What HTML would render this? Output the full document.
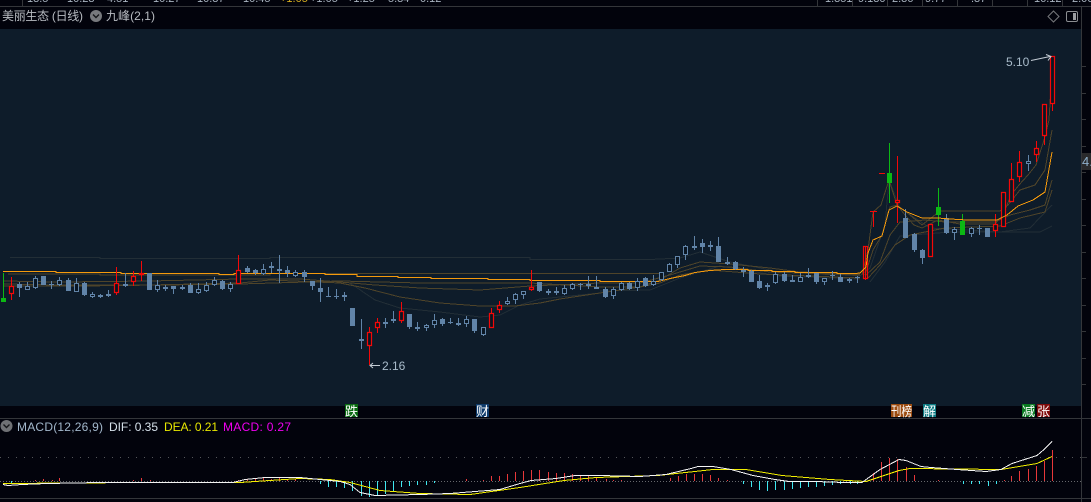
<!DOCTYPE html>
<html lang="zh"><head><meta charset="utf-8"><title>美丽生态</title>
<style>
html,body{margin:0;padding:0;width:1091px;height:502px;overflow:hidden;background:#02030c}
svg{display:block}
text{font-family:"Liberation Sans","Noto Sans CJK SC",sans-serif;font-size:12px}
.t{font-size:11px;fill:#a9b4c0}
.m{font-family:"WenQuanYi Zen Hei","Noto Sans CJK SC",sans-serif;font-size:13px;fill:#fff}
.l{fill:none;shape-rendering:crispEdges}
</style></head><body>
<svg width="1091" height="502" viewBox="0 0 1091 502" xmlns="http://www.w3.org/2000/svg">
<rect width="1091" height="502" fill="#02030c"/>
<rect x="0" y="29" width="1081" height="377" fill="#0e1c2a"/>

<!-- top strip clipped text -->
<g>
<text class="t" x="27" y="2">13.5</text><text class="t" x="67" y="2">10.23</text><text class="t" x="107" y="2">4.51</text><text class="t" x="153" y="2">10.27</text><text class="t" x="197" y="2">10.37</text><text class="t" x="243" y="2">10.45</text>
<text class="t" x="280" y="2" style="fill:#d8b020">+1.05</text><text class="t" x="310" y="2">+1.05</text><text class="t" x="347" y="2">+1.25</text><text class="t" x="388" y="2">5.34</text><text class="t" x="420" y="2">0.12</text>
<text class="t" x="825" y="2">1.351</text><text class="t" x="858" y="2">9.130</text><text class="t" x="892" y="2">2.36</text><text class="t" x="925" y="2">9.77</text><text class="t" x="971" y="2">.37</text><text class="t" x="1034" y="2">16.12</text><text class="t" x="1072" y="2">2.06</text>
</g>
<rect x="0" y="6" width="1091" height="1" fill="#34363a"/>
<path d="M22.5 0V6M817.5 0V6M852.5 0V6M887.5 0V6M922.5 0V6M957.5 0V6M992.5 0V6M1027.5 0V6M1062.5 0V6" stroke="#34363a"/>

<!-- header -->
<text x="2" y="20" fill="#b8bcc2" textLength="81" lengthAdjust="spacing">美丽生态 (日线)</text>
<circle cx="96" cy="16" r="6" fill="#77797d"/><path d="M93 14.5l3 3 3-3" fill="none" stroke="#15161a" stroke-width="1.4"/>
<text x="106" y="20" fill="#b8bcc2" textLength="49" lengthAdjust="spacing">九峰(2,1)</text>
<path d="M1053.5 11l5.5 5.5-5.5 5.5-5.5-5.5z" fill="none" stroke="#77797d"/>
<rect x="1066.5" y="11.5" width="11" height="10" rx="1.5" fill="none" stroke="#8b8d91"/><rect x="1073" y="13" width="3" height="7" fill="#9b9da1"/>

<!-- frames -->
<rect x="1081" y="7" width="1" height="495" fill="#34363a"/>
<rect x="0" y="418" width="1091" height="1" fill="#34363a"/>
<rect x="0" y="498" width="1091" height="1" fill="#34363a"/>
<path d="M1082 66.5h4M1082 93.5h4M1082 119.5h4M1082 146.5h4M1082 172.5h4M1082 199.5h4M1082 225.5h4M1082 252.5h4M1082 278.5h4M1082 305.5h4M1082 331.5h4M1082 358.5h4M1082 384.5h4M1082 457.5h5" stroke="#34363a"/>
<rect x="1082" y="153" width="9" height="17" fill="#2a2a2c"/>
<text x="1082" y="166" style="font-size:13px" fill="#8fb0cc">4.</text>

<!-- dark MAs -->
<g class="l" stroke="#222e36">
<path d="M10 257.5H100V258.5H270V257.5H530V259.5H650L680 258L700 252L730 262L780 272L860 276L870 268L885 225L889 180L900 208L930 228L1000 232L1030 228L1052 205"/>
<path d="M350 283L375 300L400 308L440 312L480 317L500 315L520 305L540 299L600 293"/>
<path d="M870 282L885 262L900 236L950 232L1040 232L1052 226"/>
<path d="M600 291L650 290L680 278L720 266L780 276L860 279"/>
</g>
<!-- brown MAs -->
<g class="l" stroke="#4f4429">
<path d="M8 274H100V275H270V273.5H530H660"/>
<path d="M3 284L60 285L150 285L240 283L270 280L340 283L365 288L400 297L440 303L480 306L515 306L540 303L560 299L600 293L640 287L660 280L680 268L700 262L730 264L770 268L800 272L860 274"/>
<path d="M3 281L60 282L150 281L240 279L300 279L340 282L375 285L420 288L480 290L530 286L600 283L640 283L670 275L700 266L730 267L770 272L860 275"/>
<path d="M3 286H80L240 284L340 281L420 283L530 283L600 287L640 287L660 283L680 275L710 270L760 274L860 278"/>
<path d="M862 275L868 250L873 212L881 205L889 180L897 205L905 215L914 225L922 228L938 220L960 224L995 224L1003 215L1011 195L1019 185L1028 175L1036 165L1044 140L1049 120L1052 70"/>
<path d="M865 275L873 250L882 235L890 207L897 205L910 215L922 225L940 211H1000L1008 205L1020 190L1035 185L1045 170L1052 130"/>
<path d="M865 276L880 262L890 235L900 222L925 220L945 222L995 222L1010 215L1030 210L1045 205L1052 180"/>
<path d="M868 278L880 265L895 245L910 235L945 228L1000 226L1020 218L1045 212L1052 190"/>
</g>
<!-- orange (left part) -->
<path class="l" stroke="#f59a0c" d="M3 271.5H56V272.5H121V273.5H219V274.5H234V273.5H325V274.5H357V276.5H398V277.5H431V278.5H488V279.5H530V280.5H600V281.5H658L670 278.5L680 276.5L685 275.5L695 272.5L710 270.5L725 269.5H748V270.5H772V271.5H795V272.5H837V273.5H855"/>

<!-- wicks blue -->
<path fill="none" stroke="#6184a8" d="M19.5 282V297M27.5 282V290M35.5 276V289M43.5 276V285M51.5 281V289M59.5 277V286M68.5 278V291M76.5 278V292M84.5 282V296M92.5 292V298M100.5 294V298M108.5 290V297M125.5 273V287M149.5 273V290M157.5 280V292M165.5 285V291M173.5 286V294M182.5 285V290M190.5 283V293M198.5 283V294M206.5 282V292M214.5 277V286M222.5 280V290M230.5 282V292M247.5 266V273M255.5 269V275M263.5 264V275M271.5 262V273M279.5 255V283M287.5 266V277M295.5 270V277M304.5 270V282M312.5 281V290M320.5 278V302M328.5 287V297M336.5 289V299M344.5 292V301M361.5 319V349M385.5 318V328M393.5 311V323M409.5 314V329M417.5 322V331M426.5 324V331M434.5 314V328M442.5 318V326M450.5 318V324M458.5 318V326M466.5 316V327M474.5 319V333M483.5 327V336M507.5 297V305M515.5 293V304M523.5 291V299M539.5 282V292M548.5 289V295M556.5 287V295M564.5 285V295M572.5 283V290M580.5 283V290M588.5 276V289M596.5 276V289M605.5 287V298M613.5 287V299M621.5 282V291M629.5 282V290M637.5 278V291M645.5 277V287M653.5 275V286M661.5 272V281M669.5 263V272M677.5 256V268M685.5 245V260M694.5 236V250M702.5 239V253M710.5 241V251M718.5 237V262M727.5 257V265M735.5 261V270M743.5 267V277M751.5 270V282M759.5 275V289M767.5 283V291M775.5 272V284M784.5 272V282M792.5 275V282M800.5 273V282M808.5 268V278M816.5 273V284M824.5 278V285M832.5 271V280M840.5 274V282M849.5 278V283M857.5 276V283M905.5 209V238M914.5 233V252M922.5 249V264M946.5 214V234M954.5 227V240M971.5 227V237M979.5 225V235M987.5 228V237M1028.5 155V171"/>
<!-- filled blue -->
<path fill="#6184a8" d="M17 284h5v4h-5zM41 276h5v9h-5zM49 284h5v1h-5zM66 280h5v11h-5zM82 283h5v12h-5zM123 284h5v2h-5zM147 273h5v17h-5zM163 287h5v2h-5zM171 286h5v3h-5zM188 285h5v8h-5zM220 281h5v8h-5zM245 268h5v4h-5zM253 270h5v3h-5zM269 266h5v2h-5zM277 269h5v2h-5zM285 270h5v3h-5zM302 272h5v5h-5zM310 281h5v5h-5zM318 288h5v4h-5zM326 296h5v1h-5zM334 296h5v1h-5zM342 295h5v2h-5zM350 308h5v18h-5zM359 339h5v2h-5zM383 322h5v2h-5zM391 319h5v2h-5zM407 314h5v13h-5zM440 319h5v5h-5zM448 322h5v1h-5zM456 323h5v2h-5zM472 319h5v12h-5zM537 282h5v9h-5zM546 291h5v2h-5zM554 291h5v2h-5zM578 284h5v1h-5zM586 284h5v2h-5zM594 287h5v2h-5zM603 289h5v8h-5zM627 283h5v6h-5zM643 278h5v8h-5zM692 246h5v2h-5zM700 243h5v4h-5zM708 245h5v2h-5zM716 246h5v16h-5zM725 262h5v2h-5zM733 262h5v7h-5zM741 270h5v2h-5zM749 271h5v11h-5zM757 281h5v7h-5zM782 274h5v7h-5zM790 280h5v2h-5zM806 275h5v2h-5zM814 273h5v9h-5zM830 275h5v1h-5zM838 277h5v5h-5zM855 277h5v1h-5zM903 218h5v20h-5zM912 234h5v16h-5zM920 250h5v8h-5zM944 218h5v15h-5zM977 228h5v1h-5zM985 228h5v9h-5z"/>
<!-- hollow blue -->
<path fill="#0a1622" stroke="#6184a8" d="M25.5 286.5h4v3h-4zM33.5 278.5h4v9h-4zM57.5 280.5h4v4h-4zM74.5 283.5h4v8h-4zM90.5 294.5h4v2h-4zM98.5 295.5h4v1h-4zM106.5 294.5h4v1h-4zM155.5 285.5h4v4h-4zM180.5 287.5h4v1h-4zM196.5 289.5h4v3h-4zM204.5 285.5h4v5h-4zM212.5 280.5h4v4h-4zM228.5 284.5h4v4h-4zM261.5 269.5h4v4h-4zM293.5 272.5h4v3h-4zM415.5 327.5h4v1h-4zM424.5 325.5h4v2h-4zM432.5 320.5h4v4h-4zM464.5 319.5h4v4h-4zM481.5 327.5h4v7h-4zM505.5 301.5h4v2h-4zM513.5 294.5h4v5h-4zM521.5 291.5h4v3h-4zM562.5 288.5h4v5h-4zM570.5 284.5h4v4h-4zM611.5 289.5h4v6h-4zM619.5 283.5h4v6h-4zM635.5 281.5h4v6h-4zM651.5 281.5h4v3h-4zM659.5 272.5h4v7h-4zM667.5 264.5h4v7h-4zM675.5 256.5h4v8h-4zM683.5 246.5h4v8h-4zM765.5 285.5h4v1h-4zM773.5 274.5h4v8h-4zM798.5 277.5h4v4h-4zM822.5 278.5h4v3h-4zM847.5 279.5h4v1h-4zM952.5 229.5h4v3h-4zM969.5 228.5h4v5h-4zM1026.5 161.5h4v2h-4z"/>
<!-- green -->
<path fill="none" stroke="#0cb814" d="M3.5 273V298M889.5 143V203M938.5 188V226M962.5 214V235"/>
<path fill="#0cb814" d="M1 298h5v4h-5zM887 173h5v10h-5zM936 207h5v8h-5zM960 221h5v14h-5z"/>
<!-- red wicks -->
<path fill="none" stroke="#f40808" d="M11.5 277V300M116.5 267V295M133.5 271V286M141.5 261V281M238.5 255V284M369.5 327V365M377.5 318V333M401.5 302V323M491.5 308V328M499.5 301V313M531.5 270V291M865.5 246V280M873.5 211V227M870 211.5h7M879 173.5h6M897.5 156V223M995.5 214V237M1003.5 192V227M1011.5 163V202M1019.5 151V182M1036.5 141V162M1044.5 124V145M1052.5 56V111"/>
<!-- red bodies -->
<path fill="#0a1622" stroke="#f40808" stroke-width="1.2" d="M9.5 286.5h4v7h-4zM114.5 283.5h4v9h-4zM131.5 276.5h4v5h-4zM139.5 273.5h4v1h-4zM236.5 270.5h4v13h-4zM367.5 332.5h4v13h-4zM375.5 322.5h4v5h-4zM399.5 311.5h4v9h-4zM489.5 313.5h4v14h-4zM497.5 305.5h4v4h-4zM529.5 287.5h4v2h-4zM895.5 200.5h4v2h-4zM928.5 224.5h4v32h-4zM993.5 224.5h4v6h-4zM1001.5 192.5h4v34h-4zM1009.5 179.5h4v22h-4zM1017.5 162.5h4v14h-4zM1034.5 148.5h4v6h-4zM1042.5 104.5h4v31h-4zM1050.5 56.5h4v47h-4z"/>
<path fill="none" stroke="#f40808" stroke-width="1.2" d="M863.5 246.5h4v32h-4z"/>
<!-- orange right, on top -->
<path class="l" stroke="#f59a0c" d="M855 273.5L860 273L866 267L868 253L873 240L882 236L889 210L897 206L907 212L922 218L938 218L950 219L967 220L997 220L1007 215L1018 206L1033 200L1045 192L1052 152"/>

<!-- annotations -->
<path d="M380 365.5H370.5M373 363l-3 2.5 3 2.5" fill="none" stroke="#c4ccd4"/>
<text x="382" y="370" fill="#a9bccb">2.16</text>
<path d="M1031 60.5L1050 56.5M1046 54.5l5 2-3 4" fill="none" stroke="#c4ccd4"/>
<text x="1006" y="66" fill="#a9bccb">5.10</text>

<!-- markers -->
<rect x="345" y="404" width="13" height="13" fill="#0a6b12"/><text class="m" x="345" y="416">跌</text>
<rect x="476" y="404" width="13" height="13" fill="#0d3a6a"/><text class="m" x="476" y="416">财</text>
<rect x="891" y="404" width="21" height="13" fill="#9c4c10"/><text class="m" x="891" y="416" textLength="21" lengthAdjust="spacingAndGlyphs">刊榜</text>
<rect x="923" y="404" width="13" height="13" fill="#0b7a82"/><text class="m" x="923" y="416">解</text>
<rect x="1022" y="404" width="13" height="13" fill="#0a7a22"/><text class="m" x="1022" y="416">减</text>
<rect x="1037" y="404" width="13" height="13" fill="#7e0a0a"/><text class="m" x="1037" y="416">张</text>

<!-- MACD header -->
<circle cx="6.5" cy="426" r="6" fill="#6f7175"/><path d="M3.5 424.5l3 3 3-3" fill="none" stroke="#15161a" stroke-width="1.4"/>
<text x="17" y="431" fill="#a3b8cc" textLength="86" lengthAdjust="spacing">MACD(12,26,9)</text>
<text x="109" y="431" fill="#d5e0ea" textLength="49" lengthAdjust="spacing">DIF: 0.35</text>
<text x="164" y="431" fill="#e8e800" textLength="54" lengthAdjust="spacing">DEA: 0.21</text>
<text x="223" y="431" fill="#f000f0" textLength="68" lengthAdjust="spacing">MACD: 0.27</text>

<!-- MACD grid -->
<path d="M0 457.5H1081" stroke="#55575b" stroke-dasharray="1 7"/>
<path d="M0 481.5H1081" stroke="#66686c" stroke-dasharray="1 2"/>
<!-- MACD bars -->
<path fill="none" stroke="#e8383a" d="M35.5 481V480M43.5 481V479M52.5 481V480M59.5 481V478M133.5 481V480M141.5 481V478M150.5 481V480M238.5 481V480M247.5 481V479M255.5 481V479M263.5 481V478M271.5 481V479M279.5 481V478M287.5 481V479M295.5 481V479M466.5 481V479M483.5 481V480M491.5 481V476M499.5 481V476M507.5 481V474M515.5 481V472M523.5 481V471M531.5 481V470M539.5 481V470M548.5 481V472M556.5 481V473M564.5 481V473M572.5 481V474M580.5 481V475M588.5 481V475M596.5 481V477M606.5 481V479M613.5 481V480M621.5 481V480M670.5 481V478M678.5 481V476M686.5 481V474M694.5 481V474M702.5 481V474M710.5 481V475M718.5 481V478M727.5 481V480M873.5 481V473M881.5 481V462M889.5 481V458M897.5 481V459M906.5 481V467M914.5 481V475M938.5 481V480M1004.5 481V480M1011.5 481V476M1019.5 481V471M1028.5 481V469M1036.5 481V466M1044.5 481V461M1052.5 481V450"/>
<path fill="none" stroke="#3fe8f0" d="M11.5 481V484M320.5 481V484M328.5 481V487M336.5 481V487M344.5 481V488M352.5 481V491M361.5 481V496M369.5 481V497M377.5 481V496M385.5 481V494M393.5 481V491M401.5 481V487M409.5 481V486M417.5 481V485M426.5 481V485M434.5 481V483M743.5 481V484M751.5 481V487M759.5 481V490M767.5 481V491M775.5 481V490M784.5 481V490M792.5 481V489M800.5 481V488M808.5 481V487M816.5 481V487M824.5 481V486M832.5 481V485M840.5 481V484M850.5 481V484M857.5 481V484M963.5 481V484M971.5 481V484M979.5 481V484M988.5 481V486M996.5 481V484"/>
<!-- MACD lines -->
<path class="l" stroke="#f2ee00" d="M3 483.5L140 482.5L240 482.5L270 480.5L300 478.5L330 479.5L350 482.5L380 490.5L420 493.5L470 494.5L520 487.5L564 480.5L596 477.5L658 475.5L713 469.5L746 469.5L782 475.5L830 479.5L866 481.5L899 470.5L910 468.5L1001 469.5L1037 463.5L1052 456.5"/>
<path class="l" stroke="#f4f4f4" d="M3 484.5L8 485.5L22 484.5L47 483.5L100 482.5L233 482.5L245 479.5L265 477.5L300 477.5L320 479.5L340 481.5L350 484.5L360 492.5L375 495.5L420 494.5L450 493.5L500 489.5L520 483.5L531 480.5L556 478.5L575 475.5L600 475.5L640 476.5L666 474.5L691 468.5L698 466.5L713 466.5L731 469.5L753 475.5L775 479.5L789 481.5L815 481.5L844 482.5L862 482.5L880 469.5L899 459.5L906 460.5L921 466.5L931 467.5L957 469.5L986 471.5L1001 469.5L1012 463.5L1037 455.5L1044 449.5L1052 441.5"/>
</svg>
</body></html>
